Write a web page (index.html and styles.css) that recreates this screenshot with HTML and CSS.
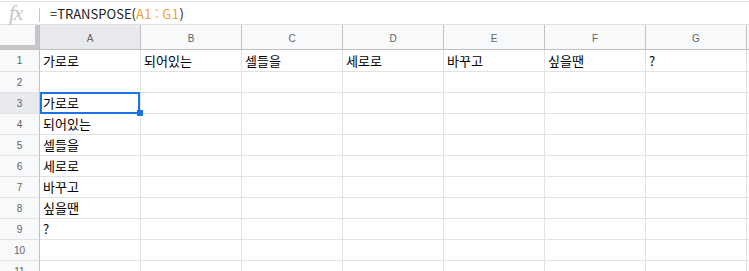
FILE: index.html
```html
<!DOCTYPE html>
<html lang="ko">
<head>
<meta charset="utf-8">
<title>Sheet</title>
<link rel="stylesheet" href="styles.css">
</head>
<body>
<div class="formula-bar">
  <span class="fx">fx</span>
  <span class="sep"></span>
  <span class="formula">=TRANSPOSE(<span class="ref">A1<span class="colon">:</span>G1</span>)</span>
</div>
<div class="sheet">
  <div class="corner"></div>
  <div class="ch sel">A</div><div class="ch">B</div><div class="ch">C</div><div class="ch">D</div><div class="ch">E</div><div class="ch">F</div><div class="ch">G</div><div class="ch fill"></div>

  <div class="rh">1</div><div class="c">가로로</div><div class="c">되어있는</div><div class="c">셀들을</div><div class="c">세로로</div><div class="c">바꾸고</div><div class="c">싶을땐</div><div class="c">?</div><div class="c fill"></div>
  <div class="rh">2</div><div class="c"></div><div class="c"></div><div class="c"></div><div class="c"></div><div class="c"></div><div class="c"></div><div class="c"></div><div class="c fill"></div>
  <div class="rh sel">3</div><div class="c">가로로</div><div class="c"></div><div class="c"></div><div class="c"></div><div class="c"></div><div class="c"></div><div class="c"></div><div class="c fill"></div>
  <div class="rh">4</div><div class="c">되어있는</div><div class="c"></div><div class="c"></div><div class="c"></div><div class="c"></div><div class="c"></div><div class="c"></div><div class="c fill"></div>
  <div class="rh">5</div><div class="c">셀들을</div><div class="c"></div><div class="c"></div><div class="c"></div><div class="c"></div><div class="c"></div><div class="c"></div><div class="c fill"></div>
  <div class="rh">6</div><div class="c">세로로</div><div class="c"></div><div class="c"></div><div class="c"></div><div class="c"></div><div class="c"></div><div class="c"></div><div class="c fill"></div>
  <div class="rh">7</div><div class="c">바꾸고</div><div class="c"></div><div class="c"></div><div class="c"></div><div class="c"></div><div class="c"></div><div class="c"></div><div class="c fill"></div>
  <div class="rh">8</div><div class="c">싶을땐</div><div class="c"></div><div class="c"></div><div class="c"></div><div class="c"></div><div class="c"></div><div class="c"></div><div class="c fill"></div>
  <div class="rh">9</div><div class="c">?</div><div class="c"></div><div class="c"></div><div class="c"></div><div class="c"></div><div class="c"></div><div class="c"></div><div class="c fill"></div>
  <div class="rh">10</div><div class="c"></div><div class="c"></div><div class="c"></div><div class="c"></div><div class="c"></div><div class="c"></div><div class="c"></div><div class="c fill"></div>
  <div class="rh">11</div><div class="c"></div><div class="c"></div><div class="c"></div><div class="c"></div><div class="c"></div><div class="c"></div><div class="c"></div><div class="c fill"></div>

  <div class="selection"><div class="handle"></div></div>
</div>
</body>
</html>
```

FILE: styles.css
```css
html, body {
  margin: 0;
  padding: 0;
  background: #ffffff;
  overflow: hidden;
}

body {
  width: 749px;
  height: 271px;
  font-family: "Noto Sans CJK KR", "Liberation Sans", sans-serif;
}

.formula-bar {
  margin-top: 1px;
  height: 22px;
  border-top: 1px solid #e1e1e1;
  border-bottom: 1px solid #e1e1e1;
  display: flex;
  align-items: center;
}

.fx {
  width: 29px;
  padding-left: 9px;
  padding-right: 1px;
  font-family: "Liberation Serif", serif;
  font-style: italic;
  font-size: 21px;
  line-height: 22px;
  color: #c4c4c4;
  letter-spacing: -1px;
}

.sep {
  width: 1px;
  height: 14px;
  background: #c4c4c4;
  margin-top: 3px;
}

.formula {
  margin-left: 10px;
  font-size: 13px;
  color: #222222;
  line-height: 22px;
  padding-top: 1px;
}

.ref {
  color: #f5a033;
  letter-spacing: 0.5px;
}

.colon {
  margin: 0 3px;
}

.sheet {
  position: relative;
  display: grid;
  grid-template-columns: 40px repeat(7, 101px) 1fr;
  grid-template-rows: 25px 22px repeat(10, 21px);
}

.sheet > div {
  box-sizing: border-box;
}

.corner {
  background: #f8f9fa;
  border-right: 1px solid #c0c0c0;
  border-bottom: 1px solid #c0c0c0;
  box-shadow: inset -4px -4px 0 #c6c6c6;
}

.ch {
  background: #f8f9fa;
  border-right: 1px solid #c0c0c0;
  border-bottom: 1px solid #c0c0c0;
  font-family: "Liberation Sans", Arial, sans-serif;
  font-size: 10px;
  color: #5f6368;
  display: flex;
  align-items: center;
  justify-content: center;
  padding-top: 2px;
}

.ch.fill {
  border-right: none;
}

.rh {
  background: #f8f9fa;
  border-right: 1px solid #c0c0c0;
  border-bottom: 1px solid #e2e2e3;
  font-family: "Liberation Sans", Arial, sans-serif;
  font-size: 10px;
  color: #5f6368;
  display: flex;
  align-items: center;
  justify-content: center;
}

.sel {
  background: #e8eaed;
}

.c {
  border-right: 1px solid #e2e2e3;
  border-bottom: 1px solid #e2e2e3;
  font-size: 13px;
  color: #000000;
  line-height: 17px;
  padding: 0 3px 2px 3px;
  display: flex;
  align-items: flex-end;
  white-space: nowrap;
  overflow: hidden;
}

.c.fill {
  border-right: none;
}

.selection {
  position: absolute;
  left: 40px;
  top: 67px;
  width: 100px;
  height: 22px;
  box-sizing: border-box;
  border: 2px solid #1a73e8;
}

.handle {
  position: absolute;
  left: 95px;
  top: 16px;
  width: 6px;
  height: 6px;
  background: #1a73e8;
}
```
